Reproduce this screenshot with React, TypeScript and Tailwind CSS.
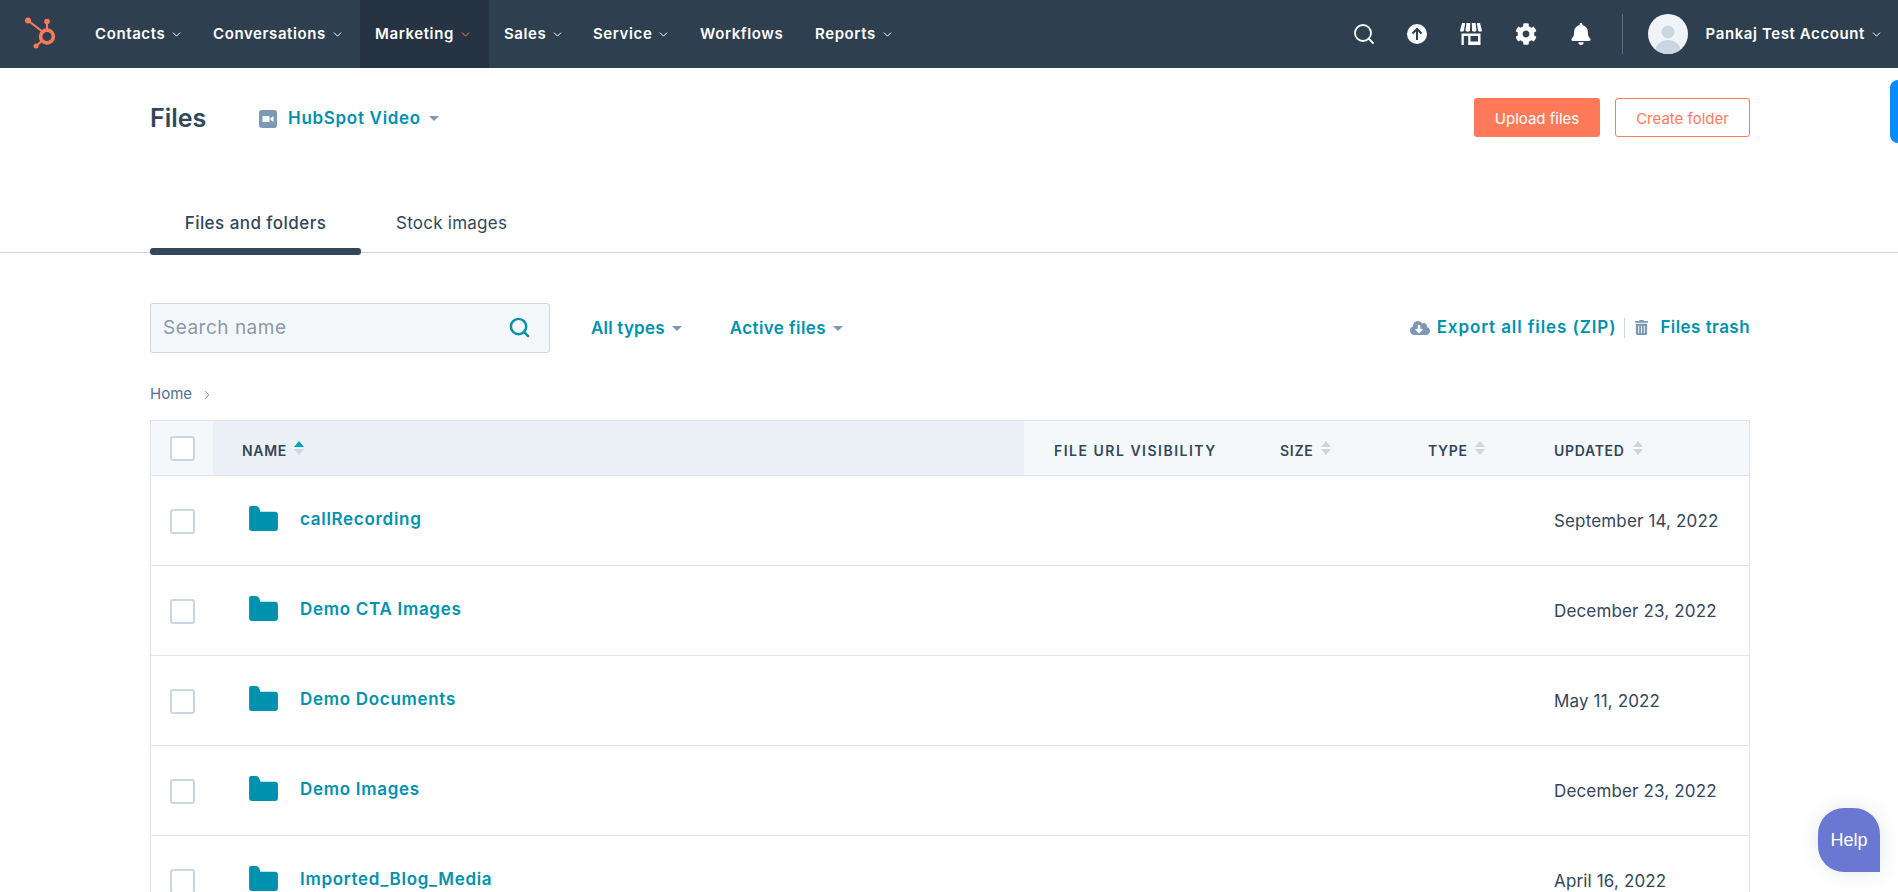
import {ChevronDown, ChevronRight, Search} from 'lucide-react';
import {FaBell, FaCloudDownloadAlt, FaCog, FaTrashAlt} from 'react-icons/fa';

const navItems = [
  {label: 'Contacts', width: 'w-[118px]', hasMenu: true},
  {label: 'Conversations', width: 'w-[162px]', hasMenu: true},
  {label: 'Marketing', width: 'w-[129px]', hasMenu: true, active: true},
  {label: 'Sales', width: 'w-[89px]', hasMenu: true},
  {label: 'Service', width: 'w-[107px]', hasMenu: true},
  {label: 'Workflows', width: 'w-[115px]', hasMenu: false},
  {label: 'Reports', width: 'w-[110px]', hasMenu: true},
];

const folders = [
  {name: 'callRecording', updated: 'September 14, 2022'},
  {name: 'Demo CTA Images', updated: 'December 23, 2022'},
  {name: 'Demo Documents', updated: 'May 11, 2022'},
  {name: 'Demo Images', updated: 'December 23, 2022'},
  {name: 'Imported_Blog_Media', updated: 'April 16, 2022'},
];

const Caret = ({className = 'border-t-[#7c98b6]'}: {className?: string}) => (
  <span className={`inline-block h-0 w-0 border-x-[5px] border-t-[5px] border-x-transparent ${className}`} />
);

const SortArrows = ({active = false}: {active?: boolean}) => (
  <span className="flex flex-col gap-[2px]">
    <span className={`h-0 w-0 border-x-[5px] border-b-[6px] border-x-transparent ${active ? 'border-b-[#00a4bd]' : 'border-b-[#cbd6e2]'}`} />
    <span className="h-0 w-0 border-x-[5px] border-t-[6px] border-x-transparent border-t-[#cbd6e2]" />
  </span>
);

const Checkbox = () => (
  <span className="block h-[25px] w-[25px] rounded-[3px] border-2 border-[#cbd6e2] bg-white" />
);

const SprocketLogo = () => (
  <svg width="40" height="40" viewBox="0 0 40 40" fill="none">
    <circle cx="27" cy="22.5" r="6.4" stroke="#ff7a59" strokeWidth="3.6" />
    <path d="M8 6.5 23 18M27 8v9M16 32l7-6" stroke="#ff7a59" strokeWidth="2.2" />
    <circle cx="8" cy="6.5" r="3" fill="#ff7a59" />
    <circle cx="27" cy="7.5" r="2.8" fill="#ff7a59" />
    <circle cx="16" cy="32" r="2.5" fill="#ff7a59" />
  </svg>
);

const UploadIcon = () => (
  <svg width="20" height="20" viewBox="0 0 20 20">
    <circle cx="10" cy="10" r="10" fill="#fff" />
    <path d="M10 16V5M5.5 9.5 10 5l4.5 4.5" fill="none" stroke="#2e3f50" strokeWidth="2" />
  </svg>
);

const StoreIcon = () => (
  <svg width="24" height="24" viewBox="0 0 24 24" fill="#fff">
    <path d="M3 1h3.2L5 8.6c-.2 1.5-3.8 1.6-4 0zM7.4 1h3.8l-.2 7.6c0 1.5-4.4 1.5-4.5 0zM12.8 1h3.8l.9 7.6c-.1 1.5-4.5 1.5-4.5 0zM17.8 1H21l2 7.6c-.2 1.6-3.8 1.5-4 0z" />
    <path fillRule="evenodd" d="M2.5 11.5h19V23h-19zM4.8 14v9h4.4v-9zM11.5 14v5.5h7.5V14z" />
  </svg>
);

const VideoIcon = () => (
  <svg width="18" height="18" viewBox="0 0 18 18">
    <rect width="18" height="18" rx="3" fill="#7c98b6" />
    <path d="M3.5 6h7v6h-7zM11.5 8.2 14.5 6v6l-3-2.2z" fill="#fff" />
  </svg>
);

const FolderIcon = () => (
  <svg width="29" height="25" viewBox="0 0 30 26" fill="#0091ae">
    <path d="M2 0h5c2 0 3.5 1.5 4 3.5l.6 2.5H27a3 3 0 0 1 3 3v14a3 3 0 0 1-3 3H3a3 3 0 0 1-3-3V2a2 2 0 0 1 2-2z" />
  </svg>
);

const Avatar = () => (
  <svg width="40" height="40" viewBox="0 0 40 40">
    <clipPath id="avatarClip">
      <circle cx="20" cy="20" r="20" />
    </clipPath>
    <g clipPath="url(#avatarClip)">
      <rect width="40" height="40" fill="#f0f4f9" />
      <circle cx="20" cy="18" r="6.5" fill="#cbd6e2" />
      <ellipse cx="20" cy="38" rx="13" ry="12" fill="#cbd6e2" />
    </g>
  </svg>
);

const App = () => {
  return (
    <div className="relative h-screen overflow-hidden bg-white font-['Inter',sans-serif] text-[#33475b]">
      <nav className="flex h-[68px] items-center bg-[#2e3f50] text-white">
        <div className="flex h-full w-[80px] items-center pl-[20px]">
          <SprocketLogo />
        </div>
        {navItems.map(item => (
          <div
            key={item.label}
            className={`flex h-full items-center gap-[5px] pl-[15px] text-[15px] font-semibold tracking-[0.6px] ${item.width} ${item.active ? 'bg-[#253342]' : ''}`}
          >
            {item.label}
            {item.hasMenu && (
              <ChevronDown size={13} strokeWidth={1.8} className={item.active ? 'text-[#ff7a59]' : 'text-white'} />
            )}
          </div>
        ))}
        <div className="ml-auto flex h-full items-center">
          <Search size={24} strokeWidth={1.8} className="ml-[2px]" />
          <span className="ml-[31px]"><UploadIcon /></span>
          <span className="ml-[32px]"><StoreIcon /></span>
          <FaCog size={22} className="ml-[32px]" />
          <FaBell size={22} className="ml-[33px]" />
          <span className="ml-[30px] h-[40px] w-px bg-[#516f90]" />
          <span className="ml-[25px]"><Avatar /></span>
          <span className="ml-[18px] text-[15px] font-semibold tracking-[0.6px]">Pankaj Test Account</span>
          <ChevronDown size={13} strokeWidth={1.8} className="mr-[15px] ml-[5px]" />
        </div>
      </nav>

      <main>
        <header className="flex items-center justify-between pt-[30px] pr-[148px] pl-[150px]">
          <div className="flex items-center pt-[2px]">
            <h1 className="w-[109px] text-[25px] font-semibold">Files</h1>
            <VideoIcon />
            <span className="ml-[11px] text-[17px] font-semibold tracking-[0.7px] text-[#0091ae]">HubSpot Video</span>
            <Caret className="ml-[8px] border-t-[#7c98b6]" />
          </div>
          <div className="flex items-center gap-[15px] text-[15px]">
            <button className="h-[39px] w-[126px] rounded-[3px] bg-[#ff7a59] pt-[2px] text-white">Upload files</button>
            <button className="h-[39px] w-[135px] rounded-[3px] border border-[#ff7a59] pt-[2px] text-[#ff7a59]">Create folder</button>
          </div>
        </header>

        <div className="mt-[52px] flex h-[63px] border-b border-[#cbd6e2] pl-[150px]">
          <div className="relative flex w-[211px] items-center justify-center pt-[6px] text-[17px] font-medium tracking-[0.45px]">
            Files and folders
            <span className="absolute right-0 bottom-[-3px] left-0 h-[7px] rounded-[3px] bg-[#33475b]" />
          </div>
          <div className="ml-[35px] flex items-center pt-[6px] text-[17px] tracking-[0.25px]">Stock images</div>
        </div>

        <div className="mt-[50px] flex items-center pr-[148px] pl-[150px]">
          <div className="flex h-[50px] w-[400px] items-center justify-between rounded-[3px] border border-[#cbd6e2] bg-[#f5f8fa] pr-[18px] pl-[12px]">
            <span className="pt-[2px] text-[19px] tracking-[0.5px] text-[#8a9aa8]">Search name</span>
            <Search size={23} strokeWidth={2.6} className="text-[#0091ae]" />
          </div>
          <div className="ml-[41px] flex items-center gap-[7px] pt-[2px] text-[17px] font-semibold tracking-[0.2px] text-[#0091ae]">
            All types
            <Caret />
          </div>
          <div className="ml-[48px] flex items-center gap-[7px] pt-[2px] text-[17px] font-semibold tracking-[0.4px] text-[#0091ae]">
            Active files
            <Caret />
          </div>
          <div className="ml-auto flex items-center text-[17px] font-semibold text-[#0091ae]">
            <FaCloudDownloadAlt size={20} className="text-[#7c98b6]" />
            <span className="ml-[7px] tracking-[0.9px]">Export all files (ZIP)</span>
            <span className="mx-[8px] h-[20px] w-px bg-[#cbd6e2]" />
            <FaTrashAlt size={15} className="ml-px text-[#7c98b6]" />
            <span className="ml-[11px] tracking-[0.45px]">Files trash</span>
          </div>
        </div>

        <div className="mt-[33px] flex h-[18px] items-center gap-[8px] pl-[150px] text-[15px] text-[#516f90]">
          Home
          <ChevronRight size={14} strokeWidth={1.5} />
        </div>

        <div className="mt-[16px] mr-[148px] ml-[150px] border-x border-[#dfe3eb]">
          <div className="grid h-[56px] grid-cols-[62px_811px_230px_148px_126px_1fr] border-y border-[#dfe3eb] bg-[#f5f8fa] text-[14px] font-semibold tracking-[0.7px]">
            <div className="flex items-center pt-[2px] pl-[19px]"><Checkbox /></div>
            <div className="flex items-center gap-[7px] bg-[#eaf0f6] pl-[29px]"><span className="pt-[6px]">NAME</span> <SortArrows active /></div>
            <div className="flex items-center pl-[30px]"><span className="pt-[6px] tracking-[1.5px]">FILE URL VISIBILITY</span></div>
            <div className="flex items-center gap-[8px] pl-[26px]"><span className="pt-[6px]">SIZE</span> <SortArrows /></div>
            <div className="flex items-center gap-[7px] pl-[26px]"><span className="pt-[6px]">TYPE</span> <SortArrows /></div>
            <div className="flex items-center gap-[8px] pl-[26px]"><span className="pt-[6px]">UPDATED</span> <SortArrows /></div>
          </div>
          {folders.map(folder => (
            <div key={folder.name} className="flex h-[90px] items-center border-b border-[#dfe3eb]">
              <div className="w-[62px] pt-[2px] pl-[19px]"><Checkbox /></div>
              <div className="ml-[36px] pb-[4px]"><FolderIcon /></div>
              <span className="ml-[22px] text-[17px] font-semibold tracking-[0.7px] text-[#0091ae]">{folder.name}</span>
              <span className="ml-auto w-[195px] pt-[4px] text-[17px] tracking-[0.15px]">{folder.updated}</span>
            </div>
          ))}
        </div>
      </main>

      {/* blue tab pinned to the window edge */}
      <div className="absolute top-[80px] right-0 h-[63px] w-[8px] rounded-l-[8px] bg-[#0a8cff]" />

      <div className="absolute top-[808px] right-[18px] flex h-[64px] w-[62px] items-center justify-center rounded-t-[26px] rounded-bl-[26px] bg-[#6a78d1] font-['Liberation_Sans',sans-serif] text-[18px] text-white shadow-[0_0_20px_rgba(45,62,80,0.12)]">
        Help
      </div>
    </div>
  );
};

export default App;
